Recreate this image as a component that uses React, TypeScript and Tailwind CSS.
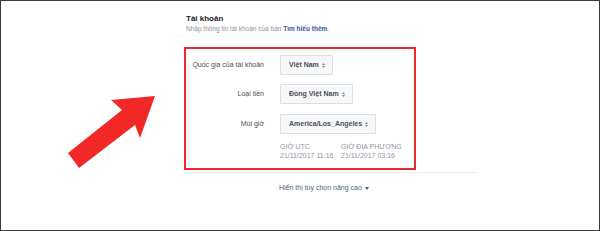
import React from 'react';

const font = { fontFamily: '"Liberation Sans", Arial, sans-serif' };

const rows = [
  { label: 'Quốc gia của tài khoản', value: 'Việt Nam' },
  { label: 'Loại tiền', value: 'Đồng Việt Nam' },
  { label: 'Múi giờ', value: 'America/Los_Angeles' },
];

const UpDown = () => (
  <svg width="3" height="5" viewBox="0 0 3 5" className="ml-[3px]">
    <path d="M1.5 0L3 2H0z M1.5 5L0 3h3z" fill="#7f838a" />
  </svg>
);

export default function App() {
  return (
    <div
      className="relative w-[600px] h-[231px] bg-white border border-[#3a3a3a] overflow-hidden"
      style={font}
    >
      {/* red annotation arrow */}
      <svg
        className="absolute left-0 top-0 pointer-events-none"
        width="200"
        height="200"
        viewBox="0 0 200 200"
      >
        <polygon
          points="67,152 121,109 110,99 154,95 139,137 134,124 78,167"
          fill="#f22828"
        />
      </svg>

      <div className="flex flex-col pl-[185px] pt-[13px]">
        <div className="text-[8px] leading-[10px] font-bold text-[#1d2129]">Tài khoản</div>
        <div className="text-[6.5px] leading-[8px] mt-[1px] text-[#90949c]">
          Nhập thông tin tài khoản của bạn{' '}
          <span className="text-[#365899] font-bold">Tìm hiểu thêm</span>.
        </div>

        {/* highlighted form */}
        <div className="-ml-[2px] mt-[14px] w-[232px] border-2 border-[#ec2a2d] pt-[6px] pb-[8px]">
          {rows.map((r, i) => (
            <div
              key={r.label}
              className={`flex items-center ${i === 0 ? '' : i === 1 ? 'mt-[9px]' : 'mt-[10px]'}`}
            >
              <div className="w-[78px] text-right text-[7px] text-[#4b4f56]">{r.label}</div>
              <div className="ml-[16px] h-[20px] flex items-center pl-[8px] pr-[7px] bg-[#f6f7f9] border border-[#dddfe2] rounded-[1px] text-[7px] font-bold text-[#4b4f56]">
                {r.value}
                <UpDown />
              </div>
            </div>
          ))}

          <div className="ml-[94px] mt-[9px] flex text-[7px] leading-[8.5px] text-[#90949c]">
            <div className="w-[61px]">
              <div>GIỜ UTC</div>
              <div>21/11/2017 11:16</div>
            </div>
            <div>
              <div>GIỜ ĐỊA PHƯƠNG</div>
              <div>21/11/2017 03:16</div>
            </div>
          </div>
        </div>

        <div className="-ml-[2px] mt-[2px] w-[293px] h-px bg-[#e9ebee]" />

        <div className="ml-[93px] mt-[11px] flex items-center text-[7px] leading-[8px] text-[#4b5f8a]">
          Hiển thị tùy chọn nâng cao
          <svg width="4" height="3" viewBox="0 0 4 3" className="ml-[3px]">
            <path d="M0 0h4L2 3z" fill="#4b5f8a" />
          </svg>
        </div>
      </div>
    </div>
  );
}
